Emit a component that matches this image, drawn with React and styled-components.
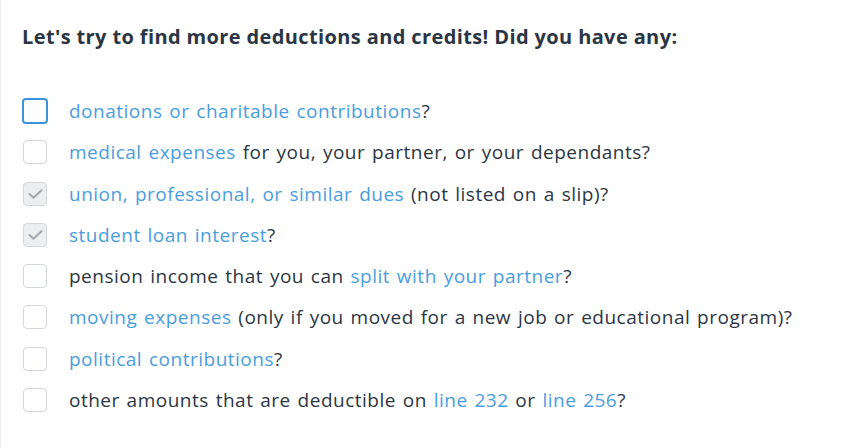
import React from "react";
import styled, { createGlobalStyle } from "styled-components";

const GlobalStyle = createGlobalStyle`
  html, body {
    margin: 0;
    padding: 0;
    background: #ffffff;
  }
  body {
    font-family: "Open Sans", Lato, sans-serif;
    -webkit-font-smoothing: antialiased;
  }
`;

const Wrapper = styled.div`
  width: 841px;
  height: 448px;
  box-sizing: border-box;
  border-left: 1px solid #eceef0;
  padding: 25px 0 0 21px;
  color: #2b3644;
`;

const Heading = styled.h2`
  margin: 0 0 50px;
  font-size: 20px;
  font-weight: 700;
  line-height: 24px;
  letter-spacing: 0.38px;
  color: #2b3644;
`;

const List = styled.ul`
  list-style: none;
  margin: 0;
  padding: 0;
  display: flex;
  flex-direction: column;
  gap: 17.3px;
`;

const Row = styled.li`
  display: flex;
  align-items: center;
  gap: 22px;
  height: 24px;
  font-size: 19px;
  line-height: 24px;
  letter-spacing: 0.5px;
  word-spacing: 1.4px;
`;

const Box = styled.span`
  flex: none;
  box-sizing: border-box;
  width: ${(p) => (p.$focused ? "26px" : "24px")};
  height: ${(p) => (p.$focused ? "26px" : "24px")};
  margin-left: ${(p) => (p.$focused ? "0" : "1px")};
  margin-right: ${(p) => (p.$focused ? "-1px" : "0")};
  border: ${(p) => (p.$focused ? "2px solid #3c93dc" : "1px solid #d3d7db")};
  border-radius: 4px;
  background: ${(p) => (p.$checked ? "#eceef0" : "#ffffff")};
  display: flex;
  align-items: center;
  justify-content: center;
`;

const Label = styled.span`
  white-space: nowrap;
`;

const Link = styled.span`
  color: #4a9ddf;
`;

const Check = () => (
  <svg width="15" height="10" viewBox="0 0 15 10" fill="none">
    <path
      d="M1.5 5 L5.5 8.8 L13.5 1.2"
      stroke="#a2a8ae"
      strokeWidth="2"
      strokeLinecap="round"
      strokeLinejoin="round"
    />
  </svg>
);

const items = [
  { focused: true, content: <><Link>donations or charitable contributions</Link>?</> },
  { content: <><Link>medical expenses</Link> for you, your partner, or your dependants?</> },
  { checked: true, content: <><Link>union, professional, or similar dues</Link> (not listed on a slip)?</> },
  { checked: true, content: <><Link>student loan interest</Link>?</> },
  { content: <>pension income that you can <Link>split with your partner</Link>?</> },
  { content: <><Link>moving expenses</Link> (only if you moved for a new job or educational program)?</> },
  { content: <><Link>political contributions</Link>?</> },
  { content: <>other amounts that are deductible on <Link>line 232</Link> or <Link>line 256</Link>?</> },
];

const App = () => (
  <Wrapper>
    <GlobalStyle />
    <Heading>Let's try to find more deductions and credits! Did you have any:</Heading>
    <List>
      {items.map((item, i) => (
        <Row key={i}>
          <Box $focused={item.focused} $checked={item.checked}>
            {item.checked && <Check />}
          </Box>
          <Label>{item.content}</Label>
        </Row>
      ))}
    </List>
  </Wrapper>
);

export default App;
